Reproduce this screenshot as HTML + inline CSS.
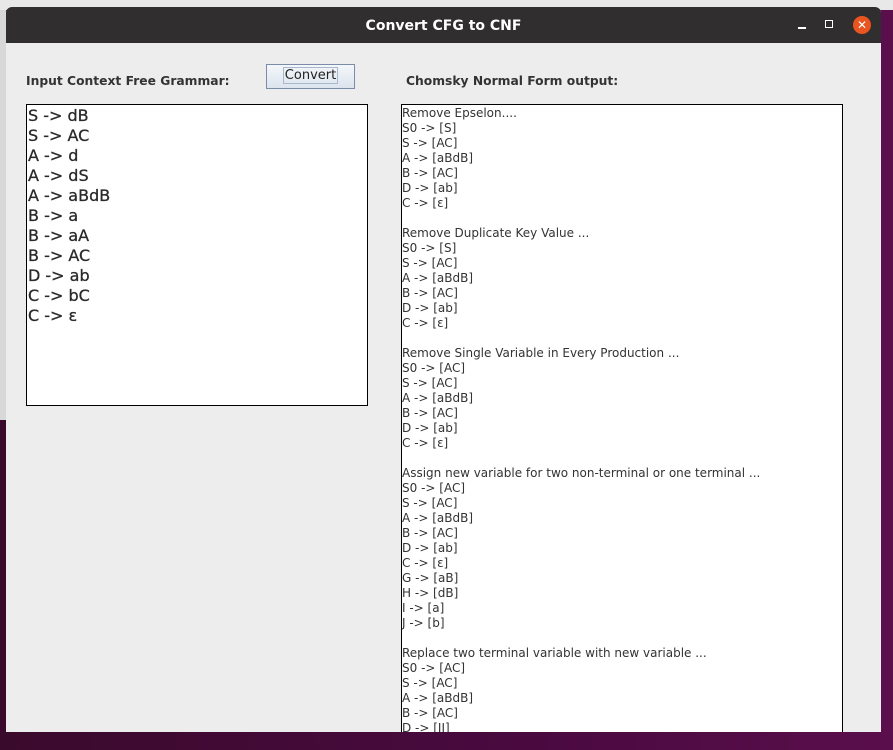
<!DOCTYPE html>
<html><head><style>
body{margin:0;width:893px;height:750px;overflow:hidden;background:linear-gradient(90deg,#3a0a2c,#4a0a40 60%,#5a0e4c);position:relative;font-family:"DejaVu Sans","Liberation Sans",sans-serif}
.top{position:absolute;left:0;top:0;width:893px;height:10px;background:#e8e8e8}
.lside{position:absolute;left:0;top:10px;width:6px;height:410px;background:#d8d8d8}
.win{position:absolute;left:6px;top:7px;width:875px;height:725px;background:#ededed;border-radius:6px 6px 0 0;overflow:hidden}
.tb{height:36px;background:#302e2e;color:#fff;font-weight:bold;font-size:14px;text-align:center;line-height:38px}
.lbl{position:absolute;font-size:12.3px;font-weight:bold;color:#333}
.btn{position:absolute;left:260px;top:57px;width:89px;height:25px;border:1px solid #7a8ca8;background:linear-gradient(#f4f7fb,#dce4ee);box-sizing:border-box;font-size:13px;text-align:center;line-height:22px;color:#222}
.btn span{border:1px solid #a9b8cc;padding:0 1px}
.ta{position:absolute;background:#fff;border:1px solid #000;box-sizing:border-box;color:#333;white-space:pre;overflow:hidden}
.l{left:20px;top:97px;width:342px;height:302px;font-size:16px;line-height:20px;padding:1px 0 0 1px;color:#2a2a2a;-webkit-text-stroke:0.3px #2a2a2a}
.r{left:395px;top:97px;width:442px;height:640px;font-size:12px;line-height:15px;padding:1px 0 0 0;border-bottom:none}
.close{position:absolute;right:10px;top:9px;width:18px;height:18px;border-radius:50%;background:#e95420;color:#fff;font-size:12px;line-height:18px;text-align:center}
</style></head><body>
<div class="top"></div><div class="lside"></div>
<div class="win">
<div class="tb">Convert CFG to CNF</div>
<div style="position:absolute;left:792px;top:20px;width:8px;height:1.5px;background:#fff"></div>
<div style="position:absolute;left:819px;top:13px;width:6px;height:6px;border:1.5px solid #fff"></div>
<div class="close">✕</div>
<div class="lbl" style="left:20px;top:67px">Input Context Free Grammar:</div>
<div class="btn"><span>Convert</span></div>
<div class="lbl" style="left:400px;top:67px">Chomsky Normal Form output:</div>
<div class="ta l">S -&gt; dB
S -&gt; AC
A -&gt; d
A -&gt; dS
A -&gt; aBdB
B -&gt; a
B -&gt; aA
B -&gt; AC
D -&gt; ab
C -&gt; bC
C -&gt; ε</div>
<div class="ta r">Remove Epselon....
S0 -&gt; [S]
S -&gt; [AC]
A -&gt; [aBdB]
B -&gt; [AC]
D -&gt; [ab]
C -&gt; [ε]

Remove Duplicate Key Value ...
S0 -&gt; [S]
S -&gt; [AC]
A -&gt; [aBdB]
B -&gt; [AC]
D -&gt; [ab]
C -&gt; [ε]

Remove Single Variable in Every Production ...
S0 -&gt; [AC]
S -&gt; [AC]
A -&gt; [aBdB]
B -&gt; [AC]
D -&gt; [ab]
C -&gt; [ε]

Assign new variable for two non-terminal or one terminal ...
S0 -&gt; [AC]
S -&gt; [AC]
A -&gt; [aBdB]
B -&gt; [AC]
D -&gt; [ab]
C -&gt; [ε]
G -&gt; [aB]
H -&gt; [dB]
I -&gt; [a]
J -&gt; [b]

Replace two terminal variable with new variable ...
S0 -&gt; [AC]
S -&gt; [AC]
A -&gt; [aBdB]
B -&gt; [AC]
D -&gt; [IJ]</div>
</div>
</body></html>
